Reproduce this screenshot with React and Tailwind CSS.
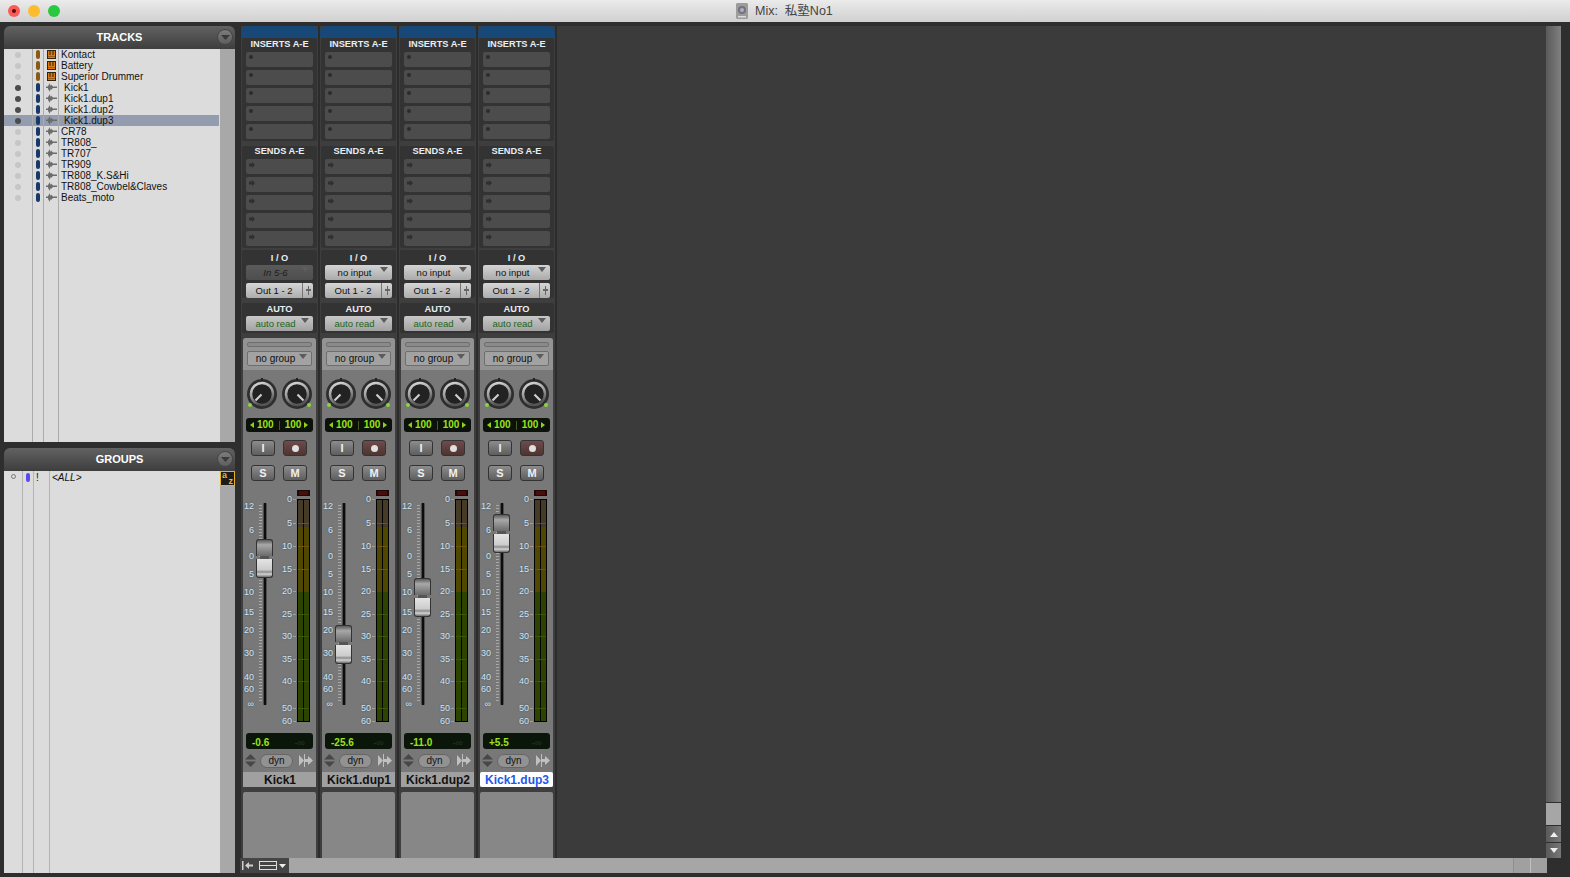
import React from "react";

const FONT = { fontFamily: '"Liberation Sans","Noto Sans CJK JP",sans-serif' };

const tracks = [
  { n: "Kontact", k: "inst" },
  { n: "Battery", k: "inst" },
  { n: "Superior Drummer", k: "inst" },
  { n: "Kick1", k: "audio", on: true, ind: true },
  { n: "Kick1.dup1", k: "audio", on: true, ind: true },
  { n: "Kick1.dup2", k: "audio", on: true, ind: true },
  { n: "Kick1.dup3", k: "audio", on: true, ind: true, sel: true },
  { n: "CR78", k: "audio" },
  { n: "TR808_", k: "audio" },
  { n: "TR707", k: "audio" },
  { n: "TR909", k: "audio" },
  { n: "TR808_K.S&Hi", k: "audio" },
  { n: "TR808_Cowbel&Claves", k: "audio" },
  { n: "Beats_moto", k: "audio" },
];

const strips = [
  { name: "Kick1", vol: "-0.6", top: 58, input: "In 5-6", dim: true },
  { name: "Kick1.dup1", vol: "-25.6", top: 144, input: "no input" },
  { name: "Kick1.dup2", vol: "-11.0", top: 97, input: "no input" },
  { name: "Kick1.dup3", vol: "+5.5", top: 33, input: "no input", sel: true },
];

const faderScale = [["12", 25], ["6", 49], ["0", 75], ["5", 93], ["10", 111], ["15", 131], ["20", 149], ["30", 172], ["40", 196], ["60", 208], ["∞", 223]];
const meterScale = [["0", 18], ["5", 42], ["10", 65], ["15", 88], ["20", 110], ["25", 133], ["30", 155], ["35", 178], ["40", 200], ["50", 227], ["60", 240]];

function Caret({ color = "#555" }) {
  return (
    <svg width="8" height="5" viewBox="0 0 8 5" className="absolute right-[4px] top-[2px]">
      <path d="M0 0h8L4 5z" fill={color} />
    </svg>
  );
}

function WaveIcon() {
  return (
    <svg width="11" height="9" viewBox="0 0 11 9" className="block">
      <path d="M0 3.500h2v-2L3 3V0l2 3V1.500l2 2h4V5H7L5 7V6L3 9V6L2 7.500V5H0z" fill="#6c6c6c" />
    </svg>
  );
}

function InstIcon() {
  return (
    <svg width="9" height="9" viewBox="0 0 9 9" className="block">
      <rect x="0" y="0" width="9" height="9" fill="#33240c" />
      <rect x="1" y="1" width="7" height="7" fill="#dd7c10" />
      <path d="M2.500 1h1v4h-1zM5.500 1h1v4h-1z" fill="#2a1c08" />
      <rect x="1" y="6" width="7" height="1" fill="#2a1c08" opacity="0.35" />
    </svg>
  );
}

function HeaderBar({ title }) {
  return (
    <div className="relative flex h-[23px] shrink-0 items-center justify-center rounded-t-[6px] bg-gradient-to-b from-[#626262] to-[#3e3e3e]">
      <span className="text-[11px] font-bold text-white">{title}</span>
      <div className="absolute right-[2px] top-[3px] flex h-[16px] w-[16px] items-center justify-center rounded-full border border-[#444] bg-gradient-to-b from-[#7c7c7c] to-[#5e5e5e]">
        <svg width="9" height="5" viewBox="0 0 9 5"><path d="M0 0h9L4.500 5z" fill="#3a3a3a" /></svg>
      </div>
    </div>
  );
}

function TrackRow({ t }) {
  const pill = t.k === "inst" ? "bg-[#8a5a14]" : "bg-[#16386a]";
  return (
    <div className={`mr-[1px] flex h-[11px] items-stretch text-[10px] leading-[11px] text-[#111] ${t.sel ? "bg-[#949cb0]" : ""}`}>
      <div className="flex w-[29px] items-center border-r border-[#ababab] pl-[11px]">
        <div className={`h-[6px] w-[6px] rounded-full ${t.on ? "bg-[#4c4c4c]" : "bg-[#c6c6c6]"}`} />
      </div>
      <div className="flex w-[11px] items-center border-r border-[#ababab] pl-[3px]">
        <div className={`h-[9px] w-[4px] rounded-[2px] ${pill}`} />
      </div>
      <div className="flex w-[15px] items-center justify-center border-r border-[#ababab]">
        {t.k === "inst" ? <InstIcon /> : <WaveIcon />}
      </div>
      <div className={`whitespace-nowrap ${t.ind ? "pl-[5px]" : "pl-[2px]"}`}>{t.n}</div>
    </div>
  );
}

function TracksPanel() {
  return (
    <div className="flex h-[416px] shrink-0 flex-col">
      <HeaderBar title="TRACKS" />
      <div className="flex min-h-0 flex-1">
        <div className="flex w-[216px] flex-col bg-[#dcdcdc]">
          {tracks.map((t) => <TrackRow key={t.n} t={t} />)}
          <div className="flex flex-1">
            <div className="w-[29px] border-r border-[#ababab]" />
            <div className="w-[11px] border-r border-[#ababab]" />
            <div className="w-[15px] border-r border-[#ababab]" />
          </div>
        </div>
        <div className="flex-1 bg-[#a8a8a8]" />
      </div>
    </div>
  );
}

function GroupsPanel() {
  return (
    <div className="mt-[6px] flex min-h-0 flex-1 flex-col">
      <HeaderBar title="GROUPS" />
      <div className="flex min-h-0 flex-1">
        <div className="flex w-[216px] bg-[#dcdcdc] text-[10px] leading-[12px] text-[#111]">
          <div className="flex w-[19px] justify-center border-r border-[#b4b4b4] pt-[3px]">
            <div className="h-[5px] w-[5px] rounded-full border border-[#777]" />
          </div>
          <div className="w-[11px] border-r border-[#b4b4b4] pl-[3px] pt-[2px]">
            <div className="h-[9px] w-[4px] rounded-[2px] bg-[#5a48f0]" />
          </div>
          <div className="w-[16px] border-r border-[#b4b4b4] pl-[2px] pt-[1px]">!</div>
          <div className="pl-[2px] pt-[1px] italic">&lt;ALL&gt;</div>
        </div>
        <div className="flex-1 bg-[#a8a8a8]">
          <div className="flex h-[15px] w-[15px] flex-col border border-[#e6b422] bg-[#1c1c1c] px-[1px] text-[9px] font-bold leading-[6px] text-[#eab81e]">
            <span>a</span>
            <span className="self-end">z</span>
          </div>
        </div>
      </div>
    </div>
  );
}

function Slot({ send }) {
  return (
    <div className="h-[15px] rounded-[2px] bg-[#4c4c4c] pl-[3px] pt-[3px]">
      {send ? (
        <svg width="6" height="6" viewBox="0 0 6 6" className="block"><path d="M0 1.500h3V0l3 3-3 3V4.500H0z" fill="#2f2f2f" /></svg>
      ) : (
        <div className="h-[4px] w-[4px] rounded-full bg-[#2c2c2c]" />
      )}
    </div>
  );
}

function SectionLabel({ children, h, lh }) {
  return (
    <div className={`whitespace-nowrap text-center text-[9.250px] font-bold text-[#e8eef4] ${h} ${lh}`}>{children}</div>
  );
}

function Selector({ label, green, dim, extra }) {
  if (extra) {
    return (
      <div className="flex h-[15px] overflow-hidden rounded-[2px] bg-gradient-to-b from-[#d6d6d6] to-[#adadad] text-[9.500px] leading-[16px] text-[#111]">
        <div className="flex-1 border-r border-[#777] text-center">{label}</div>
        <div className="flex w-[10px] items-center justify-center">
          <svg width="5" height="9" viewBox="0 0 5 9"><path d="M2 0h1v3h2v2H3v4H2V5H0V3h2z" fill="#666" /></svg>
        </div>
      </div>
    );
  }
  const tone = dim
    ? "from-[#5a5a5a] to-[#4e4e4e] text-[#1c1c1c] italic"
    : green
    ? "from-[#c8c8c8] to-[#a2a2a2] text-[#1c661a]"
    : "from-[#d4d4d4] to-[#aaaaaa] text-[#111]";
  return (
    <div className={`relative h-[15px] rounded-[2px] bg-gradient-to-b pr-[8px] text-center text-[9.500px] leading-[16px] ${tone}`}>
      {label}
      <Caret color={dim ? "#5e5e5e" : "#5c5c5c"} />
    </div>
  );
}

function Knob({ right }) {
  const id = right ? "kr" : "kl";
  return (
    <svg width="32" height="32" viewBox="0 0 32 32" className="block">
      <defs>
        <linearGradient id={id} x1="0" y1="0" x2="0.300" y2="1">
          <stop offset="0" stopColor="#dcdcdc" />
          <stop offset="0.550" stopColor="#9c9c9c" />
          <stop offset="1" stopColor="#555" />
        </linearGradient>
      </defs>
      <circle cx="16" cy="16" r="15" fill="#2e2e2e" />
      <circle cx="16" cy="16" r="11" fill="#222" stroke={`url(#${id})`} strokeWidth="2.500" />
      <rect x="15" y="0" width="2" height="3" fill="#222" />
      <path d={right ? "M16.500 16.500l6 6" : "M15.500 16.500l-6 6"} stroke="#cfcfcf" strokeWidth="2.200" />
      <circle cx={right ? 28 : 4} cy="27" r="2" fill="#86d63c" />
    </svg>
  );
}

function PanDisplay() {
  return (
    <div className="flex h-[14px] items-center rounded-[3px] bg-[#0c120a] pl-[4px] text-[10px] font-bold leading-[14px] text-[#9be21a]">
      <svg width="4" height="6" viewBox="0 0 4 6"><path d="M4 0v6L0 3z" fill="#8fd11a" /></svg>
      <span className="ml-[3px]">100</span>
      <span className="ml-[5px] h-[9px] w-px bg-[#4a5a22]" />
      <span className="ml-[5px]">100</span>
      <svg width="4" height="6" viewBox="0 0 4 6" className="ml-[3px]"><path d="M0 0v6l4-3z" fill="#8fd11a" /></svg>
    </div>
  );
}

function SmallBtn({ rec, children }) {
  return (
    <div
      className={`flex h-[16px] w-[24px] items-center justify-center rounded-[3px] border border-[#333] bg-gradient-to-b text-[11px] font-bold text-[#f0f0f0] ${
        rec ? "from-[#6e4c4a] to-[#4e3432]" : "from-[#8c8c8c] to-[#5e5e5e]"
      }`}
    >
      {rec ? <div className="h-[7px] w-[7px] rounded-full bg-[#e0e0e0]" /> : children}
    </div>
  );
}

function FaderHandle({ top }) {
  return (
    <div className="absolute left-[13px] flex h-[39px] w-[17px] flex-col items-center" style={{ top }}>
      <div className="h-[17px] w-full rounded-t-[3px] border border-b-0 border-[#333] bg-gradient-to-b from-[#5c5c5c] via-[#a8a8a8] via-30% to-[#6c6c6c]" />
      <div className="h-[3px] w-[9px] bg-[#555]" />
      <div className="h-[19px] w-full rounded-b-[3px] border border-t-0 border-[#333] bg-[linear-gradient(to_bottom,#e4e4e4_0,#cccccc_60%,#8c8c8c_72%,#d4d4d4_84%,#6e6e6e_100%)]" />
    </div>
  );
}

function MeterMarks() {
  return (
    <>
      {meterScale.map(([l, y]) => (
        <div key={l} className="absolute left-[50px] h-px w-[3px] bg-[#a0a0a0]" style={{ top: y }} />
      ))}
      {[42, 65, 88].map((y) => (
        <div key={y} className="absolute left-[55px] h-px w-[11px] bg-[#6e5410]" style={{ top: y }} />
      ))}
      {[133, 155, 178, 200, 227].map((y) => (
        <div key={y} className="absolute left-[55px] h-px w-[11px] bg-[#385a00]" style={{ top: y }} />
      ))}
    </>
  );
}

function FaderArea({ top }) {
  return (
    <div className="relative h-[252px] text-[9px] leading-[10px] text-[#d4e4ee] [text-shadow:0_0_2px_#34506a]">
      {faderScale.map(([l, y]) => (
        <span key={l} className="absolute left-0 w-[11px] text-right" style={{ top: y - 5 }}>{l}</span>
      ))}
      <div className="absolute left-[16px] top-[24px] h-[198px] w-[3px] bg-[repeating-linear-gradient(to_bottom,#a8a8a8_0,#a8a8a8_1px,transparent_1px,transparent_3px)]" />
      <div className="absolute left-[20px] top-[22px] h-[202px] w-[4px] rounded-[1px] bg-[#4e4e4e]">
        <div className="mx-auto h-full w-[2px] bg-[#0c0c0c]" />
      </div>
      <FaderHandle top={top} />
      <div className="absolute left-[54px] top-[9px] h-[6px] w-[13px] bg-[#1e0808]">
        <div className="mx-[2px] mt-[1px] h-[4px] bg-[#4a0d0d]" />
      </div>
      {meterScale.map(([l, y]) => (
        <span key={l} className="absolute left-[31px] w-[18px] text-right" style={{ top: y - 5 }}>{l}</span>
      ))}
      <div className="absolute left-[54px] top-[18px] flex h-[223px] w-[13px] border border-black bg-[linear-gradient(to_bottom,#463b26_0,#463b26_27px,#504700_27px,#504700_92px,#2c4400_92px,#2c4400_100%)]">
        <div className="ml-[5px] h-full w-px bg-black" />
      </div>
      <MeterMarks />
    </div>
  );
}

function VolDisplay({ vol }) {
  return (
    <div className="flex h-[16px] items-center justify-between rounded-[3px] bg-[#0b160b] pl-[6px] pr-[8px] pt-[2px] text-[10px] font-bold text-[#9be21a]">
      <span>{vol}</span>
      <span className="text-[#1f2d1a]">-∞</span>
    </div>
  );
}

function DynRow() {
  return (
    <div className="flex h-[15px] items-center pl-[2px]">
      <svg width="11" height="13" viewBox="0 0 11 13" className="block">
        <path d="M5.500 0L11 5.500H0z" fill="#474747" />
        <path d="M0 7.500h11L5.500 13z" fill="#474747" />
      </svg>
      <div className="ml-[4px] h-[14px] w-[33px] rounded-full border border-[#666] bg-[#929292] text-center text-[10px] leading-[12px] text-[#111]">dyn</div>
      <svg width="14" height="13" viewBox="0 0 14 13" className="ml-[6px] block">
        <path d="M0 1l5 5.500L0 12zM5 0l1 0v5h3V2l5 4.500L9 11V8H6v5H5z" fill="#c0c0c0" />
      </svg>
    </div>
  );
}

function Strip({ s }) {
  return (
    <div className="flex w-[77px] shrink-0 flex-col bg-[#3e3e3e]">
      <div className="h-[12px] rounded-t-[6px] bg-[#184878]" />
      <div className="mx-[1px] rounded-[2px] bg-[#333] px-[4px] pb-[2px]">
        <SectionLabel h="h-[14px]" lh="leading-[12px]">INSERTS A-E</SectionLabel>
        <div className="flex flex-col gap-[3px]">
          {[0, 1, 2, 3, 4].map((i) => <Slot key={i} />)}
        </div>
      </div>
      <div className="mx-[1px] mt-[5px] rounded-[2px] bg-[#333] px-[4px] pb-[2px]">
        <SectionLabel h="h-[13px]" lh="leading-[10px]">SENDS A-E</SectionLabel>
        <div className="flex flex-col gap-[3px]">
          {[0, 1, 2, 3, 4].map((i) => <Slot key={i} send />)}
        </div>
      </div>
      <div className="mx-[1px] mt-[2px] rounded-[2px] bg-[#333] px-[4px]">
        <SectionLabel h="h-[15px]" lh="leading-[16px]">I / O</SectionLabel>
        <Selector label={s.input} dim={s.dim} />
        <div className="mt-[3px]"><Selector label="Out 1 - 2" extra /></div>
      </div>
      <div className="mx-[1px] mt-[5px] rounded-[2px] bg-[#333] px-[4px] pb-[2px]">
        <SectionLabel h="h-[13px]" lh="leading-[12px]">AUTO</SectionLabel>
        <Selector label="auto read" green />
      </div>
      <div className="ml-[2px] mt-[5px] flex w-[73px] flex-col rounded-t-[3px] bg-[#787878]">
        <div className="h-[32px] rounded-t-[3px] bg-[#939393] px-[4px] pt-[4px]">
          <div className="h-[5px] rounded-[2px] border border-[#6e6e6e] bg-[#8a8a8a]" />
          <div className="mt-[4px]">
            <div className="relative h-[15px] rounded-[2px] border border-[#6e6e6e] bg-[#a2a2a2] pr-[8px] text-center text-[10px] leading-[14px] text-[#111]">
              no group
              <Caret color="#5c5c5c" />
            </div>
          </div>
        </div>
        <div className="mt-[8px] flex justify-between px-[3px]">
          <Knob />
          <Knob right />
        </div>
        <div className="ml-[3px] mt-[8px] w-[67px]"><PanDisplay /></div>
        <div className="ml-[8px] mt-[8px] flex gap-[8px]">
          <SmallBtn>I</SmallBtn>
          <SmallBtn rec />
        </div>
        <div className="ml-[8px] mt-[9px] flex gap-[8px]">
          <SmallBtn>S</SmallBtn>
          <SmallBtn>M</SmallBtn>
        </div>
        <FaderArea top={s.top} />
        <div className="ml-[3px] w-[67px]"><VolDisplay vol={s.vol} /></div>
        <div className="mt-[4px]"><DynRow /></div>
        <div
          className={`mt-[4px] h-[15px] whitespace-nowrap pl-[1px] text-center text-[12px] font-bold leading-[17px] ${
            s.sel ? "rounded-[2px] bg-white text-[#2457ea]" : "bg-[#a0a0a0] text-[#111]"
          }`}
        >
          {s.name}
        </div>
      </div>
      <div className="ml-[2px] mt-[5px] h-[66px] w-[73px] rounded-t-[2px] bg-[#878787]" />
    </div>
  );
}

function VScroll() {
  return (
    <div className="flex w-[15px] shrink-0 flex-col">
      <div className="flex-1 bg-gradient-to-r from-[#5a5a5a] to-[#808080]" />
      <div className="h-[23px] border-t border-[#2e2e2e] bg-[#a6a6a6]" />
      <div className="flex h-[17px] items-center justify-center border-t border-[#2e2e2e] bg-gradient-to-r from-[#5a5a5a] to-[#777]">
        <svg width="8" height="5" viewBox="0 0 8 5"><path d="M4 0l4 5H0z" fill="#eee" /></svg>
      </div>
      <div className="flex h-[16px] items-center justify-center border-t border-[#2e2e2e] bg-gradient-to-r from-[#5a5a5a] to-[#777]">
        <svg width="8" height="5" viewBox="0 0 8 5"><path d="M0 0h8L4 5z" fill="#eee" /></svg>
      </div>
    </div>
  );
}

function HScroll() {
  return (
    <div className="mr-[14px] flex h-[15px] shrink-0">
      <div className="flex w-[49px] items-center gap-[6px] bg-[#454545] pl-[2px]">
        <svg width="11" height="9" viewBox="0 0 11 9"><path d="M0 0h1.500v9H0zM3 4.500L7 1v2.500h4v2H7V8z" fill="#cfcfcf" /></svg>
        <div className="flex items-center gap-[2px]">
          <div className="flex h-[9px] w-[18px] flex-col justify-center border border-[#ddd]">
            <div className="h-px w-full bg-[#ddd]" />
          </div>
          <svg width="7" height="4" viewBox="0 0 7 4"><path d="M0 0h7L3.500 4z" fill="#eee" /></svg>
        </div>
      </div>
      <div className="flex-1 bg-[#a6a6a6]" />
      <div className="w-[17px] border-l border-[#8e8e8e] bg-[#a0a0a0]" />
      <div className="w-[17px] border-l border-[#c0c0c0] bg-[#a0a0a0]" />
    </div>
  );
}

function TitleBar() {
  return (
    <div className="flex h-[22px] shrink-0 items-center bg-gradient-to-b from-[#ebebeb] to-[#d0d0d0] pl-[8px]">
      <div className="flex gap-[8px]">
        <div className="flex h-[12px] w-[12px] items-center justify-center rounded-full bg-[#fb5b56]">
          <div className="h-[4px] w-[4px] rounded-full bg-[#5c0a08]" />
        </div>
        <div className="h-[12px] w-[12px] rounded-full bg-[#fdbb2e]" />
        <div className="h-[12px] w-[12px] rounded-full bg-[#28c840]" />
      </div>
      <div className="ml-[676px] flex items-center">
        <svg width="12" height="16" viewBox="0 0 12 16" className="block">
          <path d="M1 0h10l1 1v14l-1 1H1l-1-1V1z" fill="#9c9c9c" />
          <circle cx="6" cy="7" r="4" fill="#74727c" />
          <circle cx="6" cy="7" r="2" fill="#b8a8cc" />
          <rect x="2" y="13" width="8" height="1.500" fill="#dcdcdc" />
        </svg>
        <span className="ml-[7px] whitespace-pre text-[12.500px] text-[#444]">Mix:  私塾No1</span>
      </div>
    </div>
  );
}

export default function App() {
  return (
    <div className="flex h-[877px] w-[1570px] flex-col overflow-hidden bg-[#2e2e2e]" style={FONT}>
      <TitleBar />
      <div className="flex min-h-0 flex-1 pb-[4px] pt-[4px]">
        <div className="ml-[4px] flex w-[231px] shrink-0 flex-col">
          <TracksPanel />
          <GroupsPanel />
        </div>
        <div className="ml-[5px] flex w-[1321px] shrink-0 flex-col">
          <div className="flex min-h-0 flex-1">
            <div className="flex min-w-0 flex-1 bg-[#3b3b3b]">
              <div className="flex gap-[2px] bg-[#2c2c2c] pl-[1px] pr-[2px]">
                {strips.map((s) => <Strip key={s.name} s={s} />)}
              </div>
            </div>
            <VScroll />
          </div>
          <HScroll />
        </div>
      </div>
    </div>
  );
}
